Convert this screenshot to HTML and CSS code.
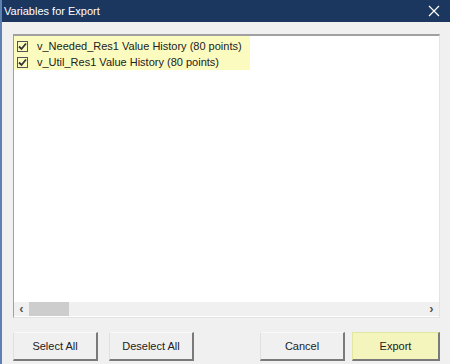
FILE: index.html
```html
<!doctype html>
<html lang="en">
<head>
    <meta charset="UTF-8">
    <title>Variables for Export</title>
    <link rel="stylesheet" href="styles.css">
</head>
<body>
    <div class="dialog">
        <div class="titlebar">
            <span class="title">Variables for Export</span>
            <svg class="close" width="12" height="12" viewBox="0 0 12 12">
                <path d="M1 1 L11 11 M11 1 L1 11" stroke="#fff" stroke-width="1.2" fill="none"/>
            </svg>
        </div>
        <div class="content">
            <div class="listbox">
                <div class="items">
                    <label class="item">
                        <span class="check"><svg width="9" height="9" viewBox="0 0 9 9"><path d="M1 4.5 L3.5 7 L8 1.5" stroke="#333" stroke-width="1.8" fill="none"/></svg></span>
                        v_Needed_Res1 Value History (80 points)
                    </label>
                    <label class="item">
                        <span class="check"><svg width="9" height="9" viewBox="0 0 9 9"><path d="M1 4.5 L3.5 7 L8 1.5" stroke="#333" stroke-width="1.8" fill="none"/></svg></span>
                        v_Util_Res1 Value History (80 points)
                    </label>
                </div>
                <div class="hscroll">
                    <span class="arrow">&lsaquo;</span>
                    <div class="track"><div class="thumb"></div></div>
                    <span class="arrow">&rsaquo;</span>
                </div>
            </div>
            <div class="buttons">
                <div class="group">
                    <button>Select All</button>
                    <button>Deselect All</button>
                </div>
                <div class="group">
                    <button>Cancel</button>
                    <button class="primary">Export</button>
                </div>
            </div>
        </div>
    </div>
</body>
</html>
```

FILE: styles.css
```css
* {
    margin: 0;
    padding: 0;
    box-sizing: border-box;
    font-family: "Liberation Sans", Arial, sans-serif;
}

body {
    width: 450px;
    height: 364px;
    overflow: hidden;
    background: #f0f0f0;
}

.dialog {
    width: 450px;
    height: 364px;
    display: flex;
    flex-direction: column;
    border-left: 2px solid #5d80b2;
    background: #f0f0f0;
}

.titlebar {
    height: 22px;
    background: #1b365f;
    display: flex;
    align-items: center;
    justify-content: space-between;
    padding: 0 10px 0 2px;
}

.title {
    color: #fff;
    font-size: 11px;
}

.content {
    flex: 1;
    padding: 12px 10px 0 11px;
    display: flex;
    flex-direction: column;
}

.listbox {
    height: 284px;
    background: #fff;
    border-top: 2px solid #a0a0a0;
    border-left: 1px solid #a0a0a0;
    border-right: 1px solid #e3e3e3;
    border-bottom: 1px solid #e3e3e3;
    display: flex;
    flex-direction: column;
}

.items {
    flex: 1;
}

.item {
    display: flex;
    align-items: center;
    width: 236px;
    height: 16px;
    padding-left: 3px;
    background: #fbfbbf;
    font-size: 11px;
    color: #222;
    gap: 9px;
    white-space: nowrap;
}

.item:first-child {
    height: 18px;
    padding-top: 2px;
}

.check {
    flex: none;
    width: 11px;
    height: 11px;
    border: 1px solid #555;
    background: #fbfbbf;
    display: flex;
    align-items: center;
    justify-content: center;
}

.hscroll {
    height: 14px;
    display: flex;
    align-items: center;
    background: #f0f0f0;
    margin-bottom: 1px;
}

.arrow {
    width: 15px;
    text-align: center;
    font-size: 13px;
    font-weight: bold;
    color: #555;
    line-height: 14px;
}

.track {
    flex: 1;
    height: 14px;
}

.thumb {
    width: 40px;
    height: 14px;
    background: #cdcdcd;
}

.buttons {
    margin-top: 14px;
    display: flex;
    justify-content: space-between;
}

.group {
    display: flex;
    gap: 11px;
}

.group:last-child {
    gap: 7px;
}

button {
    width: 85px;
    height: 29px;
    font-size: 11px;
    color: #222;
    background: #f0f0f0;
    border-top: 1px solid #f8f8f8;
    border-left: 1px solid #e0e0e0;
    border-right: 2px solid #7a7a7a;
    border-bottom: 2px solid #7a7a7a;
}

button.primary {
    width: 88px;
    background: #f4f5bd;
    border-left-color: #e4e6a0;
    border-top-color: #e4e6a0;
}
```
